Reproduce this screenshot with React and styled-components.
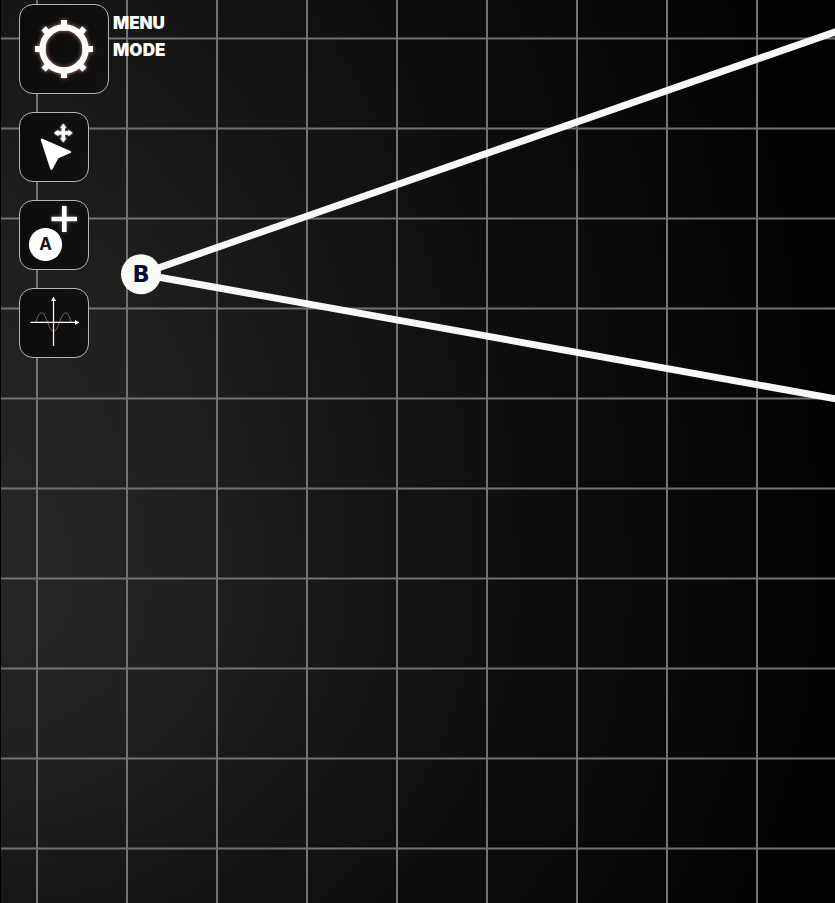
import React from "react";
import styled, { createGlobalStyle } from "styled-components";

const GlobalStyle = createGlobalStyle`
  html, body { margin: 0; background: #000; overflow: hidden; }
`;

const shades = "#252525 0%, #232323 15%, #202020 23%, #1f1f1d 25%, #1e1e1e 27%, #1a1a1a 34%, #171717 41%, #131313 50%, #0d0d0d 64%, #040404 94%, #020202 100%";

const Workspace = styled.main`
  position: relative;
  box-sizing: border-box;
  width: 835px;
  height: 903px;
  overflow: hidden;
  border-left: 1px solid #000;
  background:
    radial-gradient(ellipse 880px 1400px at -20px 590px, ${shades}) 0 0 / 100% 590px no-repeat,
    radial-gradient(ellipse 880px 760px at -20px 0, ${shades}) 0 590px / 100% 313px no-repeat;
`;

const Canvas = styled.svg`
  position: absolute;
  top: 0;
  left: -1px;
  display: block;
`;

const GridLine = styled.path`
  fill: none;
  stroke: #727272;
  stroke-width: 2;
`;

const Segment = styled.line`
  stroke: #f8f8f8;
  stroke-width: 7;
`;

const VertexLabel = styled.text`
  font: 700 22.5px "DejaVu Sans", sans-serif;
  fill: #080a35;
  text-anchor: middle;
`;

const Toolbar = styled.nav`
  position: relative;
  display: flex;
  flex-direction: column;
  align-items: flex-start;
  gap: 18px;
  padding: 4px 0 0 18px;
`;

const MenuRow = styled.div`
  display: flex;
  gap: 4px;
`;

const ToolButton = styled.button`
  box-sizing: border-box;
  width: ${({ $size }) => $size}px;
  height: ${({ $size }) => $size}px;
  padding: 0;
  border: 1px solid #b5b5b5;
  border-radius: 14px;
  background: linear-gradient(100deg, #0c0c0c, #111);

  svg { display: block; overflow: visible; }
`;

const MenuLabels = styled.div`
  display: flex;
  flex-direction: column;
  padding-top: 6px;
  color: #fff;
  font: 900 17px/27px "Inter", sans-serif;
`;

const MenuLabel = styled.span`
  letter-spacing: ${({ $tracking }) => $tracking}px;
`;

const Glow = styled.g`
  filter: drop-shadow(0 0 ${({ $radius }) => $radius}px ${({ $color }) => $color});
`;

const PointLabel = styled.text`
  font: 700 17px "Inter", sans-serif;
  fill: #151515;
  text-anchor: middle;
`;

const columns = Array.from({ length: 9 }, (_, i) => 37 + i * 90);
const rows = Array.from({ length: 10 }, (_, i) => 38.5 + i * 90);
const teeth = [0, 45, 90, 135, 180, 225, 270, 315];

function Geometry() {
  return (
    <Canvas width="835" height="903" viewBox="0 0 835 903">
      {columns.map((x) => <GridLine key={x} d={`M${x} 0V903`} />)}
      {rows.map((y) => <GridLine key={y} d={`M1 ${y}H835`} />)}
      <Segment x1="141" y1="274" x2="845" y2="28.5" />
      <Segment x1="141" y1="274" x2="845" y2="400.5" />
      <circle cx="141" cy="274.3" r="20" fill="#f7fbf3" />
      <VertexLabel x="141" y="282">B</VertexLabel>
    </Canvas>
  );
}

function GearIcon() {
  return (
    <svg width="88" height="88" viewBox="20 5 88 88">
      <Glow $radius={2} $color="#a87c62">
        <circle cx="64" cy="49" r="21.6" fill="none" stroke="#fff" strokeWidth="6.2" />
        {teeth.map((angle) => (
          <rect key={angle} x="61" y="20" width="6" height="10.5" fill="#fff" transform={`rotate(${angle} 64 49)`} />
        ))}
      </Glow>
    </svg>
  );
}

function MoveIcon() {
  return (
    <svg width="68" height="68" viewBox="20 113 68 68">
      <path d="M42 139.8L70 152L57.4 157.4L51.4 168.6Z" fill="#fff" stroke="#fff" strokeWidth="2.4" strokeLinejoin="round" />
      <Glow $radius={1} $color="#999">
        <path d="M63.3 126V140M56.3 133H70.3" stroke="#fff" strokeWidth="3.4" />
        <path d="M63.3 123.8L66.2 127.8H60.4ZM63.3 142.2L66.2 138.2H60.4ZM54.2 133L58.2 130.1V135.9ZM72.4 133L68.4 130.1V135.9Z" fill="#fff" stroke="#fff" strokeWidth="0.5" />
      </Glow>
    </svg>
  );
}

function AddPointIcon() {
  return (
    <svg width="68" height="68" viewBox="20 201 68 68">
      <circle cx="45.5" cy="244.5" r="16.6" fill="#fff" />
      <PointLabel x="45.5" y="249.8">A</PointLabel>
      <Glow $radius={2} $color="#555">
        <path d="M64.3 206V232M51.5 219H77" stroke="#fff" strokeWidth="4.7" />
      </Glow>
    </svg>
  );
}

function FunctionIcon() {
  return (
    <svg width="68" height="68" viewBox="20 289 68 68">
      <path d="M36 322C37.5 316 39.5 312.8 41.5 312.8C46.5 312.8 48.5 331.5 53.5 331.5S60.5 312.8 65.5 312.8C67.5 312.8 69.5 316 71 322" fill="none" stroke="#80644f" strokeWidth="1" />
      <path d="M53.5 346V300M30.5 322.4H76" stroke="#fff" strokeWidth="1.2" />
      <path d="M53.5 296.5L56 301H51ZM79.5 322.4L75 319.9V324.9Z" fill="#fff" />
    </svg>
  );
}

export default function App() {
  return (
    <>
      <GlobalStyle />
      <Workspace>
        <Geometry />
        <Toolbar aria-label="Geometry tools">
          <MenuRow>
            <ToolButton $size={90} aria-label="Menu"><GearIcon /></ToolButton>
            <MenuLabels>
              <MenuLabel $tracking={-0.05}>MENU</MenuLabel>
              <MenuLabel $tracking={0.1}>MODE</MenuLabel>
            </MenuLabels>
          </MenuRow>
          <ToolButton $size={70} aria-label="Move"><MoveIcon /></ToolButton>
          <ToolButton $size={70} aria-label="Add point"><AddPointIcon /></ToolButton>
          <ToolButton $size={70} aria-label="Function graph"><FunctionIcon /></ToolButton>
        </Toolbar>
      </Workspace>
    </>
  );
}
